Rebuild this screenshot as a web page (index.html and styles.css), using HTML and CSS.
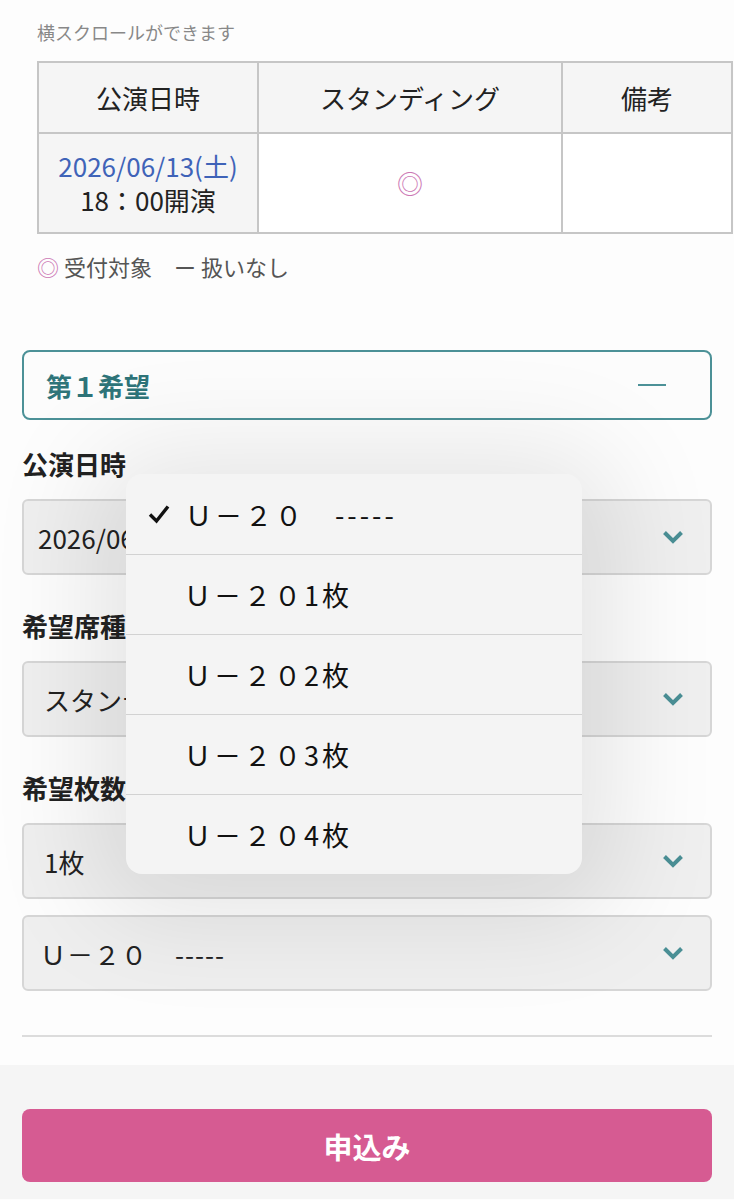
FILE: index.html
```html
<!DOCTYPE html>
<html lang="ja">
<head>
    <meta charset="UTF-8">
    <meta name="viewport" content="width=device-width, initial-scale=1.0">
    <link rel="stylesheet" href="styles.css">
</head>
<body>
    <div class="page">
        <p class="scroll-note">横スクロールができます</p>
        <div class="table-wrap">
            <table class="schedule">
                <thead>
                    <tr>
                        <th class="col-date">公演日時</th>
                        <th class="col-seat">スタンディング</th>
                        <th class="col-note">備考</th>
                    </tr>
                </thead>
                <tbody>
                    <tr>
                        <th><span class="date">2026/06/13(土)</span><br>18：00開演</th>
                        <td class="ok">◎</td>
                        <td></td>
                    </tr>
                </tbody>
            </table>
        </div>
        <p class="legend"><span class="ok">◎</span>受付対象　ー 扱いなし</p>

        <div class="wish">
            <div class="wish-head">
                <span class="wish-title">第１希望</span>
                <span class="minus"></span>
            </div>

            <div class="field">
                <label>公演日時</label>
                <div class="select select-date">
                    <span>2026/06/13(土) 18：00開演</span>
                    <svg class="chevron" width="22" height="14" viewBox="0 0 22 14"><polyline points="2.5,2.5 11,11 19.5,2.5" fill="none" stroke="#4a8f95" stroke-width="4"/></svg>
                </div>
            </div>
            <div class="field">
                <label>希望席種</label>
                <div class="select">
                    <span>スタンディング</span>
                    <svg class="chevron" width="22" height="14" viewBox="0 0 22 14"><polyline points="2.5,2.5 11,11 19.5,2.5" fill="none" stroke="#4a8f95" stroke-width="4"/></svg>
                </div>
            </div>
            <div class="field">
                <label>希望枚数</label>
                <div class="select">
                    <span>1枚</span>
                    <svg class="chevron" width="22" height="14" viewBox="0 0 22 14"><polyline points="2.5,2.5 11,11 19.5,2.5" fill="none" stroke="#4a8f95" stroke-width="4"/></svg>
                </div>
                <div class="select select-u20">
                    <span>Ｕ－２０　-----</span>
                    <svg class="chevron" width="22" height="14" viewBox="0 0 22 14"><polyline points="2.5,2.5 11,11 19.5,2.5" fill="none" stroke="#4a8f95" stroke-width="4"/></svg>
                </div>
            </div>
        </div>
        <hr class="divider">

        <!-- open picker for the U-20 select -->
        <ul class="picker">
            <li class="selected">
                <svg class="check" width="22" height="20" viewBox="0 0 22 20"><polyline points="2,10.5 8.5,17 20,2.5" fill="none" stroke="#111" stroke-width="3.4"/></svg>
                <span>Ｕ－２０　-----</span>
            </li>
            <li><span>Ｕ－２０1枚</span></li>
            <li><span>Ｕ－２０2枚</span></li>
            <li><span>Ｕ－２０3枚</span></li>
            <li><span>Ｕ－２０4枚</span></li>
        </ul>
    </div>
    <div class="footer">
        <button type="button" class="apply">申込み</button>
    </div>
</body>
</html>
```

FILE: styles.css
```css
body {
    margin: 0;
    padding: 0;
    font-family: "Noto Sans CJK JP", "Noto Sans", sans-serif;
    color: #222;
    background-color: #fdfdfd;
}

.page {
    position: relative;
    padding: 0 22px;
    overflow: hidden;
}

.scroll-note {
    margin: 0;
    padding: 20px 15px 0;
    font-size: 18px;
    line-height: 24px;
    color: #888;
}

.table-wrap {
    margin: 17px -22px 0 15px;
}

.schedule {
    border-collapse: collapse;
    border: 2px solid #c6c6c6;
    table-layout: fixed;
    width: 696px;
}
.schedule th, .schedule td {
    border: 2px solid #c6c6c6;
    text-align: center;
    font-weight: normal;
    padding: 0;
}
.schedule thead th {
    height: 69px;
    font-size: 26px;
    background-color: #f5f5f5;
}
.schedule tbody th, .schedule tbody td {
    height: 98px;
    font-size: 26px;
    line-height: 34px;
}
.schedule tbody th {
    background-color: #f5f5f5;
}
.schedule tbody td {
    background-color: #fff;
}
.col-date { width: 218px; }
.col-seat { width: 302px; }
.date {
    color: #3f63b8;
}
.ok {
    color: #cc77b4;
}

.legend {
    margin: 17px 0 0 15px;
    font-size: 22px;
    line-height: 30px;
    color: #555;
}
.legend .ok {
    margin-right: 5px;
}

.wish {
    margin-top: 69px;
}
.wish-head {
    display: flex;
    justify-content: space-between;
    align-items: center;
    height: 66px;
    padding: 0 44px 0 22px;
    border: 2px solid #4c9197;
    border-radius: 8px;
    background-color: #fcfcfc;
}
.wish-title {
    font-size: 26px;
    font-weight: bold;
    color: #2e7479;
}
.minus {
    width: 28px;
    height: 2px;
    background-color: #4c9197;
}

.field {
    margin-top: 26px;
}
.field + .field {
    margin-top: 33px;
}
.field label {
    display: block;
    font-size: 26px;
    font-weight: bold;
    line-height: 36px;
    margin-bottom: 17px;
}

.select {
    display: flex;
    justify-content: space-between;
    align-items: center;
    height: 72px;
    padding: 0 26px 0 20px;
    border: 2px solid #d6d6d6;
    border-radius: 6px;
    background-color: #efefef;
    font-size: 26px;
    white-space: nowrap;
}
.select-date {
    padding-left: 14px;
}
.select-u20 {
    margin-top: 16px;
    padding-left: 16px;
    letter-spacing: 1px;
}
.chevron {
    flex-shrink: 0;
}

.divider {
    margin: 44px 0 0;
    border: 0;
    border-top: 2px solid #dcdcdc;
    height: 0;
    padding-bottom: 28px;
}

.picker {
    position: absolute;
    top: 474px;
    left: 126px;
    width: 456px;
    margin: 0;
    padding: 0;
    list-style: none;
    background-color: #f4f4f4;
    border-radius: 16px;
    box-shadow: 0 10px 110px 30px rgba(0, 0, 0, 0.1);
    overflow: hidden;
}
.picker li {
    display: flex;
    align-items: center;
    height: 80px;
    padding-left: 58px;
    font-size: 27px;
    letter-spacing: 3px;
    color: #111;
}
.picker li + li {
    height: 79px;
    border-top: 1px solid #d2d2d2;
}
.picker li.selected {
    padding-left: 22px;
}
.check {
    margin-right: 15px;
}

.footer {
    background-color: #f5f5f5;
    padding: 44px 22px 17px;
}
.apply {
    display: block;
    width: 100%;
    height: 73px;
    border: 0;
    border-radius: 8px;
    background-color: #d65b92;
    color: #fff;
    font-family: inherit;
    font-size: 29px;
    font-weight: bold;
}
```
